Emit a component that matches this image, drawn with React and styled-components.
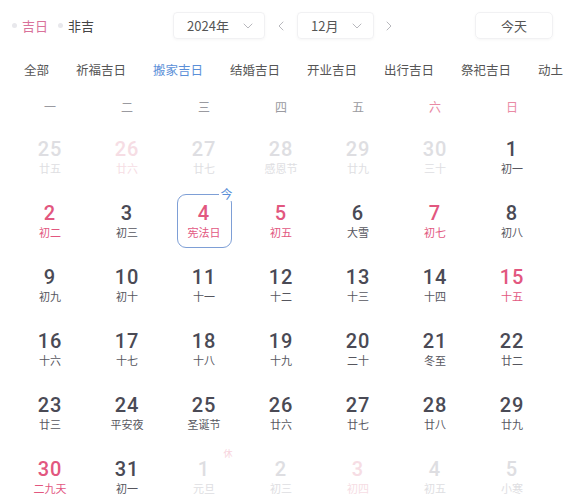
import React from "react";
import styled, { createGlobalStyle } from "styled-components";

const GlobalStyle = createGlobalStyle`
  html, body {
    margin: 0;
    padding: 0;
    background: #fff;
    font-family: "Noto Sans CJK SC", "Noto Sans", sans-serif;
    overflow: hidden;
  }
`;

const PINK = "#e2577f";
const BLUE = "#5b8fd8";

const Page = styled.div`
  width: 567px;
  height: 500px;
  overflow: hidden;
  padding-top: 12px;
  box-sizing: border-box;
`;

const TopBar = styled.div`
  display: flex;
  align-items: center;
  height: 27px;
  padding-left: 12px;
`;

const Legend = styled.div`
  display: flex;
  align-items: center;
  gap: 10px;
`;

const LegendItem = styled.div`
  display: flex;
  align-items: center;
  gap: 5px;
  font-size: 13px;
  color: ${(p) => (p.$lucky ? "#d9729a" : "#444")};
`;

const Dot = styled.span`
  width: 5px;
  height: 5px;
  border-radius: 50%;
  background: #e8e8ec;
`;

const Select = styled.div`
  display: flex;
  align-items: center;
  justify-content: space-between;
  box-sizing: border-box;
  width: ${(p) => p.$w}px;
  height: 27px;
  margin-left: ${(p) => p.$ml || 0}px;
  padding: 0 10px 0 13px;
  border: 1px solid #f1f1f3;
  border-radius: 4px;
  box-shadow: 0 1px 3px rgba(0, 0, 0, 0.04);
  font-size: 13px;
  color: #555;
`;

const Arrow = styled.div`
  display: flex;
  align-items: center;
  justify-content: center;
  width: ${(p) => p.$w}px;
  color: #c8c8cc;
`;

const TodayButton = styled.div`
  display: flex;
  align-items: center;
  justify-content: center;
  box-sizing: border-box;
  width: 78px;
  height: 27px;
  margin-left: 71px;
  border: 1px solid #f1f1f3;
  border-radius: 5px;
  box-shadow: 0 1px 3px rgba(0, 0, 0, 0.04);
  font-size: 13px;
  color: #555;
`;

const Tabs = styled.div`
  display: flex;
  align-items: center;
  gap: 27px;
  height: 28px;
  margin-top: 16px;
  padding-left: 24px;
  white-space: nowrap;
  overflow: hidden;
`;

const Tab = styled.div`
  font-size: 12.5px;
  color: ${(p) => (p.$active ? BLUE : "#555")};
  flex-shrink: 0;
`;

const Grid = styled.div`
  display: grid;
  grid-template-columns: repeat(7, 77px);
  padding-left: 11.5px;
`;

const WeekRow = styled(Grid)`
  margin-top: 9px;
  height: 28px;
  align-items: center;
`;

const WeekDay = styled.div`
  text-align: center;
  font-size: 12px;
  color: ${(p) => (p.$weekend ? "#e98aa5" : "#9a9aa0")};
`;

const DayGrid = styled(Grid)`
  margin-top: 2px;
  grid-auto-rows: 64px;
`;

const Cell = styled.div`
  display: flex;
  align-items: center;
  justify-content: center;
`;

const DayBox = styled.div`
  position: relative;
  box-sizing: border-box;
  width: 55px;
  height: 54px;
  margin-top: 6px;
  display: flex;
  flex-direction: column;
  align-items: center;
  justify-content: center;
  border: 1.5px solid ${(p) => (p.$today ? "#7e9fd6" : "transparent")};
  border-radius: 9px;
`;

const Num = styled.div`
  font-family: Roboto, "Noto Sans", sans-serif;
  font-size: 20px;
  font-weight: 500;
  line-height: 22px;
  letter-spacing: 1px;
  color: ${(p) => p.$color};
`;

const Lunar = styled.div`
  font-size: 11px;
  line-height: 16px;
  color: ${(p) => p.$color};
`;

const TodayMark = styled.span`
  position: absolute;
  top: -8px;
  right: -3px;
  padding: 0 1px;
  background: #fff;
  font-size: 12px;
  line-height: 14px;
  color: ${BLUE};
`;

const RestMark = styled.span`
  position: absolute;
  top: -4px;
  right: -2px;
  font-size: 9px;
  color: #f7d4dd;
`;

const Chevron = ({ dir }) => {
  const d = {
    down: "M2 4 L6 8 L10 4",
    left: "M8 2 L4 6 L8 10",
    right: "M4 2 L8 6 L4 10",
  }[dir];
  return (
    <svg width="12" height="12" viewBox="0 0 12 12" fill="none">
      <path d={d} stroke="#b8b8bd" strokeWidth="1" strokeLinecap="round" strokeLinejoin="round" />
    </svg>
  );
};

const days = [
  [25, "廿五", "out"], [26, "廿六", "outLucky"], [27, "廿七", "out"], [28, "感恩节", "out"], [29, "廿九", "out"], [30, "三十", "out"], [1, "初一"],
  [2, "初二", "lucky"], [3, "初三"], [4, "宪法日", "today"], [5, "初五", "lucky"], [6, "大雪"], [7, "初七", "lucky"], [8, "初八"],
  [9, "初九"], [10, "初十"], [11, "十一"], [12, "十二"], [13, "十三"], [14, "十四"], [15, "十五", "lucky"],
  [16, "十六"], [17, "十七"], [18, "十八"], [19, "十九"], [20, "二十"], [21, "冬至"], [22, "廿二"],
  [23, "廿三"], [24, "平安夜"], [25, "圣诞节"], [26, "廿六"], [27, "廿七"], [28, "廿八"], [29, "廿九"],
  [30, "二九天", "lucky"], [31, "初一"], [1, "元旦", "rest"], [2, "初三", "out"], [3, "初四", "outLucky"], [4, "初五", "out"], [5, "小寒", "out"],
];

const colorsFor = (kind) => {
  switch (kind) {
    case "lucky":
    case "today":
      return [PINK, PINK];
    case "out":
    case "rest":
      return ["#dedee2", "#dedee2"];
    case "outLucky":
      return ["#f6dde4", "#f6dde4"];
    default:
      return ["#4a4a55", "#56565e"];
  }
};

const tabs = ["全部", "祈福吉日", "搬家吉日", "结婚吉日", "开业吉日", "出行吉日", "祭祀吉日", "动土"];
const weekdays = ["一", "二", "三", "四", "五", "六", "日"];

export default function App() {
  return (
    <Page>
      <GlobalStyle />
      <TopBar>
        <Legend>
          <LegendItem $lucky>
            <Dot />
            吉日
          </LegendItem>
          <LegendItem>
            <Dot />
            非吉
          </LegendItem>
        </Legend>
        <Select $w={92} $ml={79}>
          2024年
          <Chevron dir="down" />
        </Select>
        <Arrow $w={32}>
          <Chevron dir="left" />
        </Arrow>
        <Select $w={77}>
          12月
          <Chevron dir="down" />
        </Select>
        <Arrow $w={30}>
          <Chevron dir="right" />
        </Arrow>
        <TodayButton>今天</TodayButton>
      </TopBar>

      <Tabs>
        {tabs.map((t) => (
          <Tab key={t} $active={t === "搬家吉日"}>
            {t}
          </Tab>
        ))}
      </Tabs>

      <WeekRow>
        {weekdays.map((w, i) => (
          <WeekDay key={w} $weekend={i >= 5}>
            {w}
          </WeekDay>
        ))}
      </WeekRow>

      <DayGrid>
        {days.map(([n, lunar, kind], i) => {
          const [numColor, subColor] = colorsFor(kind);
          return (
            <Cell key={i}>
              <DayBox $today={kind === "today"}>
                <Num $color={numColor}>{n}</Num>
                <Lunar $color={subColor}>{lunar}</Lunar>
                {kind === "today" && <TodayMark>今</TodayMark>}
                {kind === "rest" && <RestMark>休</RestMark>}
              </DayBox>
            </Cell>
          );
        })}
      </DayGrid>
    </Page>
  );
}
